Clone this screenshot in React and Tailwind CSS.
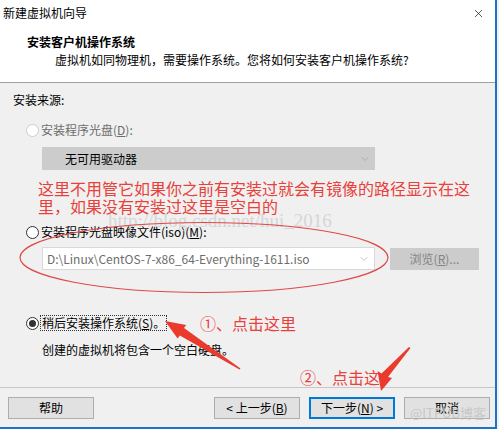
import { ChevronDown, X } from "lucide-react";

function Radio({ checked, disabled }) {
  return (
    <span
      className={
        "flex h-[13px] w-[13px] items-center justify-center rounded-full border bg-white " +
        (disabled ? "border-[#cccccc]" : "border-[#333333]")
      }
    >
      {checked && <span className="h-[7px] w-[7px] rounded-full bg-[#333333]" />}
    </span>
  );
}

function Btn({ children, primary, className = "" }) {
  return (
    <div
      className={
        "flex h-[22px] w-[86px] items-center justify-center bg-[#e1e1e1] text-[12px] " +
        (primary ? "border-2 border-[#0078d7] " : "border border-[#adadad] ") +
        className
      }
    >
      {children}
    </div>
  );
}

export default function App() {
  return (
    <div
      className="relative h-[429px] w-[499px] overflow-hidden bg-[#f0f0f0] text-black"
      style={{ fontFamily: '"Noto Sans CJK SC", "Noto Sans", sans-serif' }}
    >
      <div className="flex h-full w-[497px] flex-col border-r-2 border-b-2 border-[#1c73c4]">
        {/* title bar */}
        <div className="flex h-[26px] items-center bg-white pl-[3px] pr-[10px] text-[12px]">
          <span>新建虚拟机向导</span>
          <X className="ml-auto h-[13px] w-[13px]" strokeWidth={1.2} />
        </div>

        {/* header */}
        <div className="flex h-[57px] flex-col border-b border-[#a0a0a0] bg-white pl-[27px]">
          <div className="mt-[7px] text-[12px] leading-[18px] font-bold">安装客户机操作系统</div>
          <div className="ml-[28px] mt-[1px] text-[12px] leading-[16px]">
            虚拟机如同物理机，需要操作系统。您将如何安装客户机操作系统?
          </div>
        </div>

        {/* body */}
        <div className="flex flex-1 flex-col pl-[13px] text-[12px]">
          <div className="mt-[9px] h-[16px] leading-[16px]">安装来源:</div>

          <div className="ml-[13px] mt-[14px] flex h-[16px] items-center gap-[1px] text-[#6d6d6d]">
            <Radio disabled />
            <span className="ml-[1px] leading-[16px]">
              安装程序光盘(<span className="underline">D</span>):
            </span>
          </div>

          <div className="ml-[29px] mt-[9px] flex h-[23px] w-[333px] items-center bg-[#cccccc] pl-[23px] pr-[4px]">
            <span>无可用驱动器</span>
            <ChevronDown className="ml-auto h-[12px] w-[12px] text-[#999999]" strokeWidth={1.2} />
          </div>

          <div className="ml-[13px] mt-[54px] flex h-[16px] items-center">
            <Radio />
            <span className="ml-[2px] leading-[16px]">
              安装程序光盘映像文件(iso)(<span className="underline">M</span>):
            </span>
          </div>

          <div className="mt-[7px] flex h-[23px] items-center">
            <div className="ml-[29px] flex h-[23px] w-[333px] items-center border border-[#d9d9d9] bg-white pl-[4px] pr-[4px] text-[#6d6d6d]">
              <span>D:\Linux\CentOS-7-x86_64-Everything-1611.iso</span>
              <ChevronDown className="ml-auto h-[12px] w-[12px] text-[#999999]" strokeWidth={1.2} />
            </div>
            <div className="ml-[15px] flex h-[22px] w-[89px] items-center justify-center bg-[#cccccc] text-[#838383]">
              浏览(<span className="underline">R</span>)...
            </div>
          </div>

          <div className="ml-[13px] mt-[45px] flex h-[16px] items-center">
            <Radio checked />
            <span className="ml-[1px] border border-dotted border-[#333333] px-[1px] leading-[14px]">
              稍后安装操作系统(<span className="underline">S</span>)。
            </span>
          </div>

          <div className="ml-[29px] mt-[11px] h-[16px] leading-[16px]">创建的虚拟机将包含一个空白硬盘。</div>
        </div>

        {/* footer */}
        <div className="flex h-[40px] items-start border-t border-[#c8c8c8] pt-[9px] pl-[8px]">
          <Btn className="w-[85px]">帮助</Btn>
          <Btn className="ml-[120px]">
            &lt; 上一步(<span className="underline">B</span>)
          </Btn>
          <Btn primary className="ml-[9px]">
            下一步(<span className="underline">N</span>) &gt;
          </Btn>
          <Btn className="ml-[9px]">取消</Btn>
        </div>
      </div>

      {/* annotations drawn over the screenshot */}
      <div className="pointer-events-none absolute left-[38px] top-[179px] text-[16px] leading-[18px] text-[#e8403a]">
        <div>这里不用管它如果你之前有安装过就会有镜像的路径显示在这</div>
        <div>里，如果没有安装过这里是空白的</div>
      </div>
      <div
        className="pointer-events-none absolute left-[108px] top-[210px] whitespace-nowrap text-[19px] leading-[22px] text-[#d6d6d6]"
        style={{ fontFamily: '"Liberation Serif", serif' }}
      >
        http://blog.csdn.net/hui_2016
      </div>
      <div className="pointer-events-none absolute left-[200px] top-[314px] text-[16px] leading-[18px] text-[#e8403a]">
        ①、点击这里
      </div>
      <div className="pointer-events-none absolute left-[300px] top-[368px] text-[16px] leading-[18px] text-[#e8403a]">
        ②、点击这
      </div>
      <div className="pointer-events-none absolute left-[410px] top-[404px] whitespace-nowrap text-[13px] leading-[18px] text-[#c8c8c8]">
        @ITPUB博客
      </div>
      <svg className="pointer-events-none absolute left-0 top-0" width="499" height="429">
        <ellipse cx="204" cy="257.5" rx="184" ry="35" fill="none" stroke="#e04848" strokeWidth="1.2" />
        <polygon
          points="165,321 186.2,325.1 184,328 240.5,368.5 239.5,369.5 179.8,335.5 177.6,338.5"
          fill="#ea3a2e"
        />
        <polygon points="381,391 377.5,371 381.5,373.5 409,347 410.5,348 388,377 392,378" fill="#ea3a2e" />
      </svg>
    </div>
  );
}
